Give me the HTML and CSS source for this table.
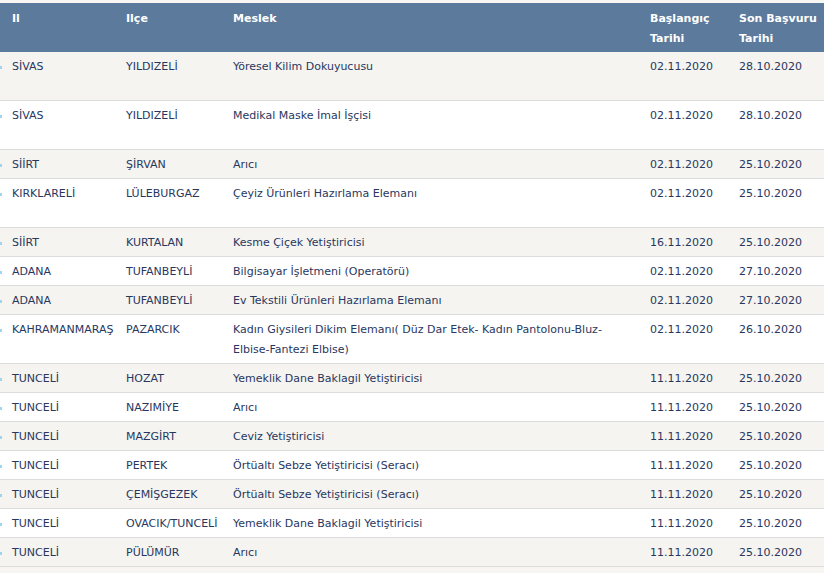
FILE: index.html
```html
<!DOCTYPE html>
<html lang="tr">
<head>
<meta charset="utf-8">
<title>Meslek Listesi</title>
<link rel="stylesheet" href="styles.css">
</head>
<body>
<table class="grid">
  <colgroup>
    <col class="c-il"><col class="c-ilce"><col class="c-meslek"><col class="c-bas"><col class="c-son">
  </colgroup>
  <thead>
    <tr>
      <th>Il</th><th>Ilçe</th><th>Meslek</th><th>Başlangıç Tarihi</th><th>Son Başvuru Tarihi</th>
    </tr>
  </thead>
  <tbody>
    <tr class="tall"><td><span class="mark"></span>SİVAS</td><td>YILDIZELİ</td><td>Yöresel Kilim Dokuyucusu</td><td>02.11.2020</td><td>28.10.2020</td></tr>
    <tr class="tall"><td><span class="mark"></span>SİVAS</td><td>YILDIZELİ</td><td>Medikal Maske İmal İşçisi</td><td>02.11.2020</td><td>28.10.2020</td></tr>
    <tr><td><span class="mark"></span>SİİRT</td><td>ŞİRVAN</td><td>Arıcı</td><td>02.11.2020</td><td>25.10.2020</td></tr>
    <tr class="tall"><td><span class="mark"></span>KIRKLARELİ</td><td>LÜLEBURGAZ</td><td>Çeyiz Ürünleri Hazırlama Elemanı</td><td>02.11.2020</td><td>25.10.2020</td></tr>
    <tr><td><span class="mark"></span>SİİRT</td><td>KURTALAN</td><td>Kesme Çiçek Yetiştiricisi</td><td>16.11.2020</td><td>25.10.2020</td></tr>
    <tr><td><span class="mark"></span>ADANA</td><td>TUFANBEYLİ</td><td>Bilgisayar İşletmeni (Operatörü)</td><td>02.11.2020</td><td>27.10.2020</td></tr>
    <tr><td><span class="mark"></span>ADANA</td><td>TUFANBEYLİ</td><td>Ev Tekstili Ürünleri Hazırlama Elemanı</td><td>02.11.2020</td><td>27.10.2020</td></tr>
    <tr><td><span class="mark"></span>KAHRAMANMARAŞ</td><td>PAZARCIK</td><td>Kadın Giysileri Dikim Elemanı( Düz Dar Etek- Kadın Pantolonu-Bluz-<br>Elbise-Fantezi Elbise)</td><td>02.11.2020</td><td>26.10.2020</td></tr>
    <tr><td><span class="mark"></span>TUNCELİ</td><td>HOZAT</td><td>Yemeklik Dane Baklagil Yetiştiricisi</td><td>11.11.2020</td><td>25.10.2020</td></tr>
    <tr><td><span class="mark"></span>TUNCELİ</td><td>NAZIMİYE</td><td>Arıcı</td><td>11.11.2020</td><td>25.10.2020</td></tr>
    <tr><td><span class="mark"></span>TUNCELİ</td><td>MAZGİRT</td><td>Ceviz Yetiştiricisi</td><td>11.11.2020</td><td>25.10.2020</td></tr>
    <tr><td><span class="mark"></span>TUNCELİ</td><td>PERTEK</td><td>Örtüaltı Sebze Yetiştiricisi (Seracı)</td><td>11.11.2020</td><td>25.10.2020</td></tr>
    <tr><td><span class="mark"></span>TUNCELİ</td><td>ÇEMİŞGEZEK</td><td>Örtüaltı Sebze Yetiştiricisi (Seracı)</td><td>11.11.2020</td><td>25.10.2020</td></tr>
    <tr><td><span class="mark"></span>TUNCELİ</td><td>OVACIK/TUNCELİ</td><td>Yemeklik Dane Baklagil Yetiştiricisi</td><td>11.11.2020</td><td>25.10.2020</td></tr>
    <tr><td><span class="mark"></span>TUNCELİ</td><td>PÜLÜMÜR</td><td>Arıcı</td><td>11.11.2020</td><td>25.10.2020</td></tr>
  </tbody>
</table>
</body>
</html>
```
FILE: styles.css
```css
html, body {
  margin: 0;
  padding: 0;
}
body {
  background: #f7f6f3;
  font-family: "DejaVu Sans", Verdana, sans-serif;
  font-size: 11px;
  color: #29375f;
  overflow: hidden;
}
.grid {
  margin-top: 3px;
  width: 824px;
  table-layout: fixed;
  border-collapse: collapse;
}
.c-il { width: 114px; }
.c-ilce { width: 107px; }
.c-meslek { width: 417px; }
.c-bas { width: 89px; }
.c-son { width: 97px; }
.grid th {
  background: #5c7a9c;
  color: #ffffff;
  font-weight: bold;
  text-align: left;
  vertical-align: top;
  line-height: 20px;
  padding: 6px 0 3px 12px;
  height: 40px;
}
.grid td {
  vertical-align: top;
  line-height: 20px;
  padding: 5px 0 3px 12px;
  border-bottom: 1px solid #dcdcdc;
  white-space: nowrap;
}
.grid td:first-child {
  padding-left: 0;
}
.grid tbody tr:nth-child(odd) td {
  background: #f5f4f0;
}
.grid tbody tr:nth-child(even) td {
  background: #ffffff;
}
.grid tr.tall td {
  height: 40px;
}
.mark {
  display: inline-block;
  width: 2px;
  height: 3px;
  margin-right: 10px;
  background: #9fd6ee;
  vertical-align: middle;
}
```
